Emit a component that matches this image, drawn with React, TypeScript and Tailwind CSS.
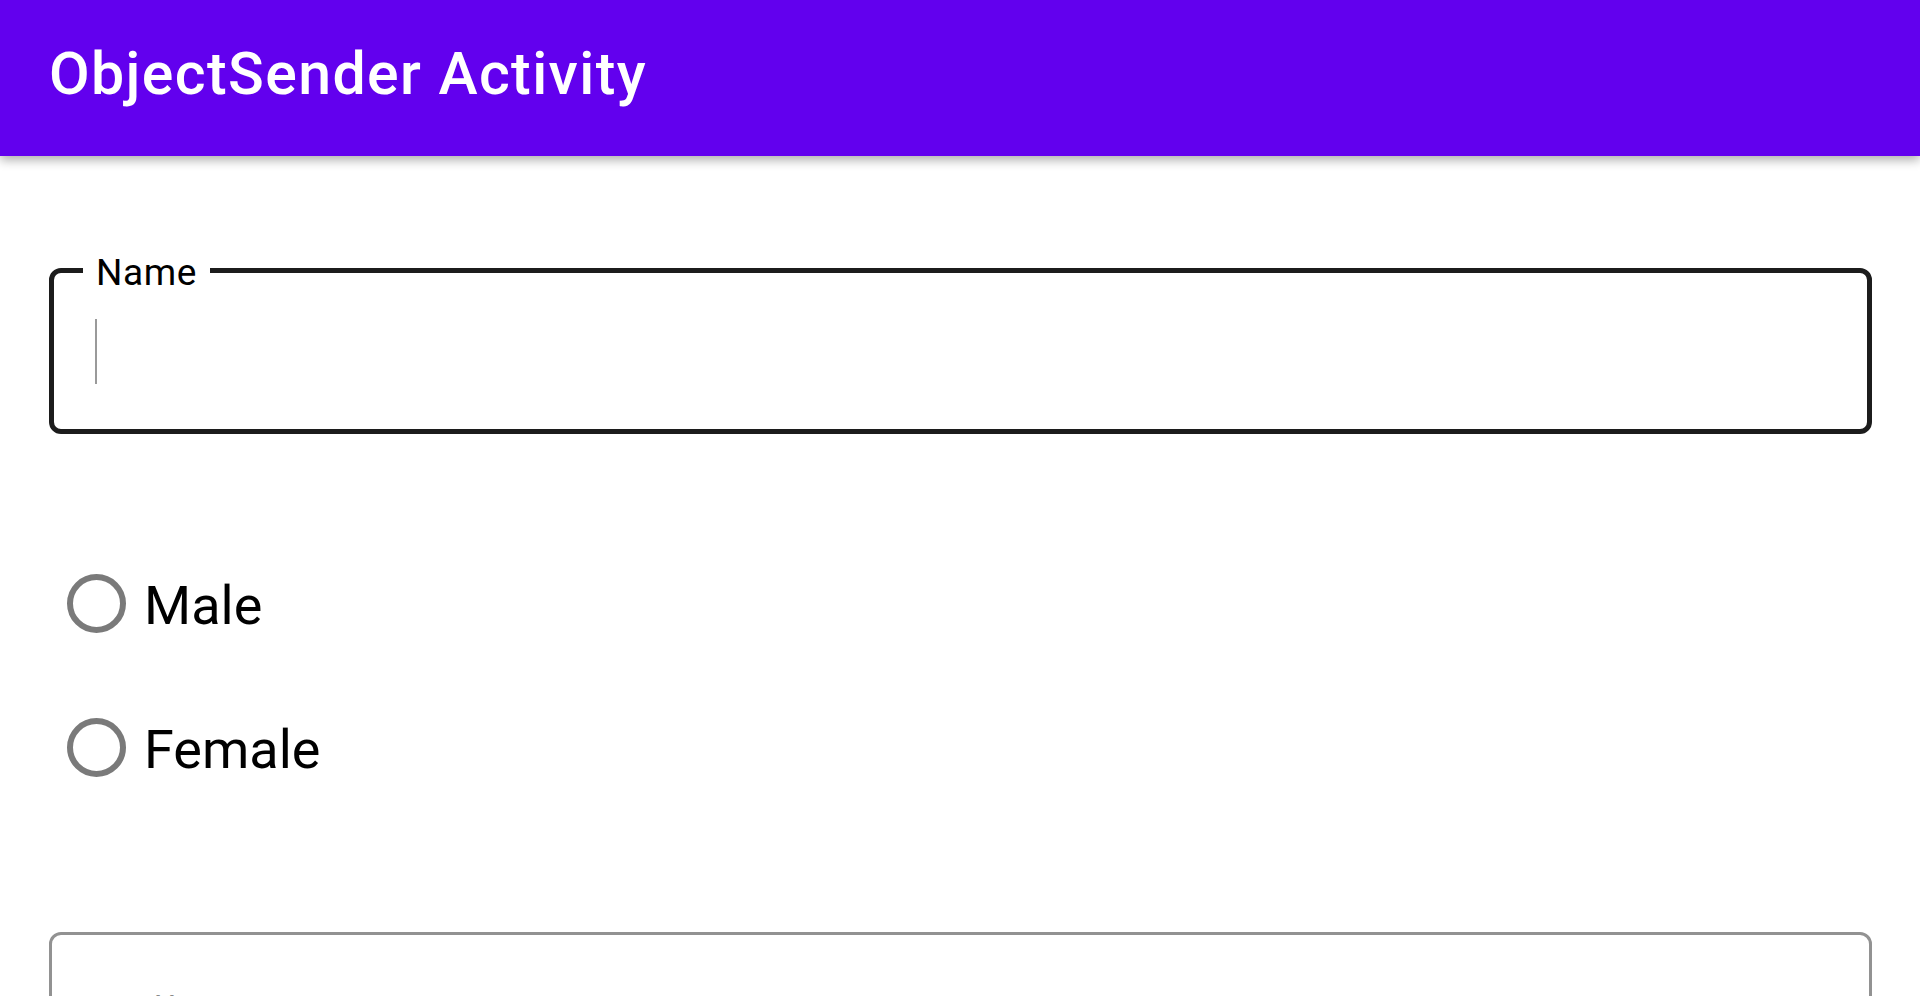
import React from "react";

function Radio({ label }: { label: string }) {
  return (
    <div className="flex h-[144px] items-center pl-[18px]">
      <span className="box-border h-[59px] w-[59px] rounded-full border-[6px] border-[#7a7a7a]" />
      <span className="ml-[18px] pt-[5px] text-[54px] leading-[66px] text-black">{label}</span>
    </div>
  );
}

export default function App() {
  return (
    <div className="flex h-[996px] flex-col overflow-hidden bg-white font-['Roboto',sans-serif]">
      <header className="relative z-10 h-[156px] shrink-0 bg-[#6200ee] pl-[49px] pt-[44px] shadow-[0_4px_10px_rgba(0,0,0,0.32)]">
        <h1 className="text-[59px] font-medium leading-[59px] tracking-[1.4px] text-white">ObjectSender Activity</h1>
      </header>

      <main className="flex flex-col px-[48px] pl-[49px] pt-[112px]">
        <div className="relative box-border h-[166px] rounded-[12px] border-[5px] border-[#1c1c1c]">
          <label className="absolute left-[29px] top-[-20px] bg-white px-[13px] text-[37px] leading-[40px] tracking-[0.6px] text-black">
            Name
          </label>
          <div className="ml-[41px] mt-[46px] h-[65px] w-[2px] bg-[#9a9a9a]" />
        </div>

        <div className="mt-[97px] flex flex-col">
          <Radio label="Male" />
          <Radio label="Female" />
        </div>

        <div className="relative mt-[113px] box-border h-[166px] shrink-0 rounded-[12px] border-[3px] border-[#929292]">
          <div className="ml-[104px] mt-[53px] text-[30px] leading-[36px] text-[#8a8a8a]">Year</div>
        </div>
      </main>
    </div>
  );
}
